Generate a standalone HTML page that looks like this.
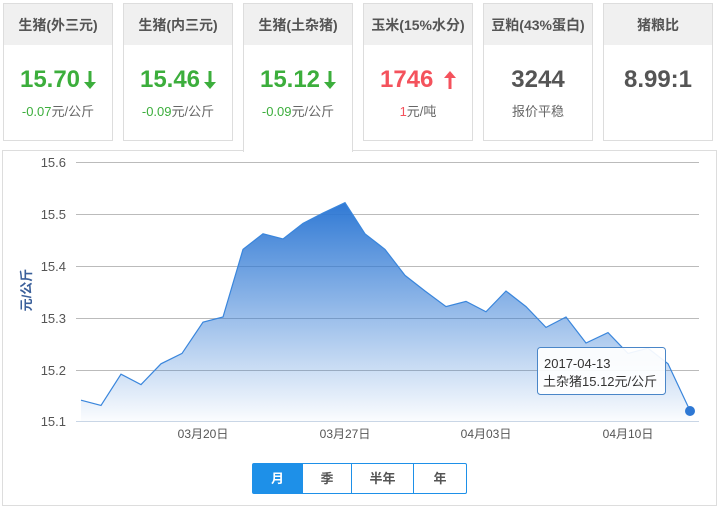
<!DOCTYPE html>
<html><head><meta charset="utf-8"><style>
body{margin:0;width:721px;height:508px;background:#fff;font-family:"Liberation Sans","Noto Sans CJK SC",sans-serif;position:relative;overflow:hidden}
.card{position:absolute;top:3px;width:108px;height:136px;border:1px solid #ddd;background:#fff;text-align:center}
.card .h{height:41px;background:#f0f0f0;line-height:42px;font-size:14px;font-weight:bold;color:#555}
.card .v{margin-top:20px;font-size:24px;font-weight:bold;line-height:30px}
.card .v svg{vertical-align:-2px;margin-left:4px}
.card .s{margin-top:6px;font-size:13px;color:#666}
.g{color:#3cae3c}.r{color:#f4525c}.d{color:#555}
.panel{position:absolute;left:2px;top:150px;width:713px;height:354px;border:1px solid #ddd}
.btns{position:absolute;left:252px;top:463px;height:29px;border:1px solid #1e90e8;border-radius:2px;display:flex;font-size:13px;font-weight:bold;color:#555}
.btns div{line-height:29px;text-align:center;border-left:1px solid #1e90e8}
</style></head><body>
<div class="panel"></div>
<div class="card" style="left:3px"><div class="h">生猪(外三元)</div><div class="v g">15.70<svg width="12" height="18" viewBox="0 0 12 18"><path d="M4.5 0h3v11h4.5L6 18 0 11h4.5z" fill="#3cae3c"/></svg></div><div class="s"><span class="g">-0.07</span>元/公斤</div></div>
<div class="card" style="left:123px"><div class="h">生猪(内三元)</div><div class="v g">15.46<svg width="12" height="18" viewBox="0 0 12 18"><path d="M4.5 0h3v11h4.5L6 18 0 11h4.5z" fill="#3cae3c"/></svg></div><div class="s"><span class="g">-0.09</span>元/公斤</div></div>
<div class="card" style="left:243px;height:148px;border-bottom:none"><div class="h">生猪(土杂猪)</div><div class="v g">15.12<svg width="12" height="18" viewBox="0 0 12 18"><path d="M4.5 0h3v11h4.5L6 18 0 11h4.5z" fill="#3cae3c"/></svg></div><div class="s"><span class="g">-0.09</span>元/公斤</div></div>
<div class="card" style="left:363px"><div class="h">玉米(15%水分)</div><div class="v r">1746 <svg width="12" height="18" viewBox="0 0 12 18"><path d="M4.5 18h3V7h4.5L6 0 0 7h4.5z" fill="#f4525c"/></svg></div><div class="s"><span class="r">1</span>元/吨</div></div>
<div class="card" style="left:483px"><div class="h">豆粕(43%蛋白)</div><div class="v d">3244</div><div class="s">报价平稳</div></div>
<div class="card" style="left:603px"><div class="h">猪粮比</div><div class="v d">8.99:1</div></div>
<svg style="position:absolute;left:0;top:0" width="721" height="508">
<defs><linearGradient id="gr" x1="0" y1="200" x2="0" y2="421" gradientUnits="userSpaceOnUse"><stop offset="0" stop-color="#2e78d4"/><stop offset="1" stop-color="#2e78d4" stop-opacity="0.02"/></linearGradient></defs>
<g stroke="#bbb" stroke-width="1">
<line x1="76" y1="162.5" x2="699" y2="162.5"/><line x1="76" y1="214.5" x2="699" y2="214.5"/><line x1="76" y1="266.5" x2="699" y2="266.5"/><line x1="76" y1="318.5" x2="699" y2="318.5"/><line x1="76" y1="370.5" x2="699" y2="370.5"/><line x1="76" y1="421.5" x2="699" y2="421.5" stroke="#c9d6e6"/>
</g>
<g fill="#555" font-size="13" font-family="Liberation Sans,sans-serif" text-anchor="end">
<text x="66" y="167">15.6</text><text x="66" y="219">15.5</text><text x="66" y="271">15.4</text><text x="66" y="323">15.3</text><text x="66" y="375">15.2</text><text x="66" y="426">15.1</text></g>
<text transform="translate(31,290) rotate(-90)" text-anchor="middle" fill="#3a5f9a" font-size="13" font-weight="bold" font-family="Liberation Sans,Noto Sans CJK SC,sans-serif">元/公斤</text>
<path d="M81,400.2 L101,405.4 121,374.2 141,384.6 161,363.8 182,353.4 203,322.2 223,317 243,249.4 263,233.8 283,239 303,223.4 323,213 345,202.6 365,233.8 385,249.4 405,275.4 425,291 446,306.6 466,301.4 486,311.8 506,291 526,306.6 546,327.4 566,317 586,343 608,332.6 628,353.4 648,348.2 668,363.8 690,410.6 L690,421 L81,421 Z" fill="url(#gr)"/>
<path d="M81,400.2 L101,405.4 121,374.2 141,384.6 161,363.8 182,353.4 203,322.2 223,317 243,249.4 263,233.8 283,239 303,223.4 323,213 345,202.6 365,233.8 385,249.4 405,275.4 425,291 446,306.6 466,301.4 486,311.8 506,291 526,306.6 546,327.4 566,317 586,343 608,332.6 628,353.4 648,348.2 668,363.8 690,410.6" fill="none" stroke="#3a86dc" stroke-width="1.2"/>
<circle cx="690" cy="411" r="5" fill="#2e78d4"/>
<g fill="#555" font-size="12" font-family="Liberation Sans,Noto Sans CJK SC,sans-serif" text-anchor="middle">
<text x="203" y="438">03月20日</text><text x="345" y="438">03月27日</text><text x="486" y="438">04月03日</text><text x="628" y="438">04月10日</text></g>
<rect x="537.5" y="347.5" width="128" height="47" rx="3" fill="#fff" fill-opacity="0.92" stroke="#4a86c8"/>
<text x="544" y="368" font-size="13" fill="#333" font-family="Liberation Sans,sans-serif">2017-04-13</text>
<text x="543" y="386" font-size="13" fill="#333" font-family="Liberation Sans,Noto Sans CJK SC,sans-serif">土杂猪15.12元/公斤</text>
</svg>
<div class="btns"><div style="width:49px;border:none;background:#1e90e8;color:#fff">月</div><div style="width:48px">季</div><div style="width:61px">半年</div><div style="width:52px">年</div></div>
</body></html>
